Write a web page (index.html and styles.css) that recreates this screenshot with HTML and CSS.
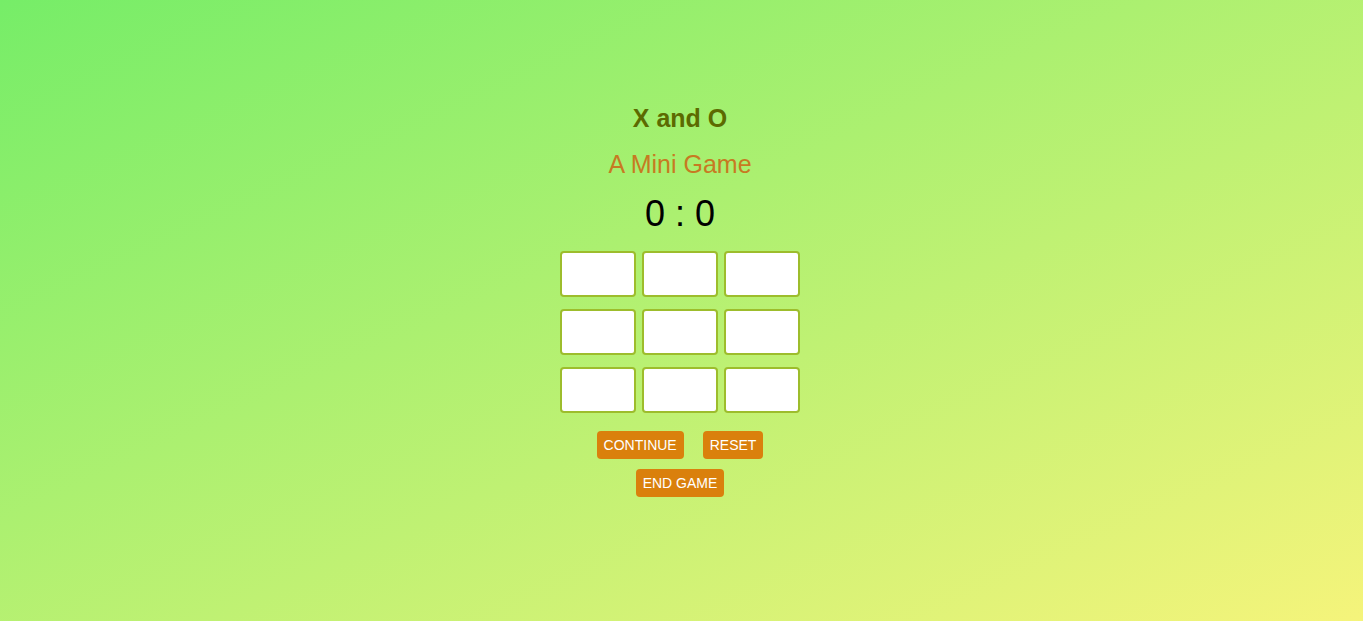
FILE: index.html
```html
<!DOCTYPE html>
<html>
<head>
<meta charset="utf-8">
<link rel="stylesheet" href="styles.css">
</head>
<body>
<main class="game">
  <h1 class="title">X and O</h1>
  <h2 class="subtitle">A Mini Game</h2>
  <div class="score">0 : 0</div>
  <div class="board">
    <div class="cell"></div><div class="cell"></div><div class="cell"></div>
    <div class="cell"></div><div class="cell"></div><div class="cell"></div>
    <div class="cell"></div><div class="cell"></div><div class="cell"></div>
  </div>
  <div class="controls">
    <button class="btn">CONTINUE</button>
    <button class="btn">RESET</button>
  </div>
  <div class="controls">
    <button class="btn">END GAME</button>
  </div>
</main>
</body>
</html>
```
FILE: styles.css
```css
html, body {
  margin: 0;
  height: 100%;
}
body {
  background: linear-gradient(to bottom right, #76ed68, #f5f47b);
  font-family: "Liberation Sans", Arial, sans-serif;
}
.game {
  display: flex;
  flex-direction: column;
  align-items: center;
  padding-top: 103px;
  padding-right: 3px;
}
.title {
  margin: 0;
  font-size: 25px;
  font-weight: bold;
  color: #5c6a00;
  line-height: 30px;
}
.subtitle {
  margin: 16px 0 0;
  font-size: 25px;
  font-weight: normal;
  color: #c77a22;
  line-height: 30px;
}
.score {
  margin-top: 14px;
  font-size: 36px;
  line-height: 42px;
  color: #000;
}
.board {
  margin-top: 16px;
  display: grid;
  grid-template-columns: repeat(3, 76px);
  grid-auto-rows: 46px;
  column-gap: 6px;
  row-gap: 12px;
}
.cell {
  background: #fff;
  border: 2px solid #9dbd2c;
  border-radius: 4px;
}
.controls {
  display: flex;
  gap: 19px;
  margin-top: 18px;
}
.controls + .controls {
  margin-top: 10px;
}
.btn {
  font-family: "Liberation Sans", Arial, sans-serif;
  font-size: 14px;
  color: #fff;
  background: #da800c;
  border: none;
  border-radius: 4px;
  height: 28px;
  padding: 0 7px;
}
```
